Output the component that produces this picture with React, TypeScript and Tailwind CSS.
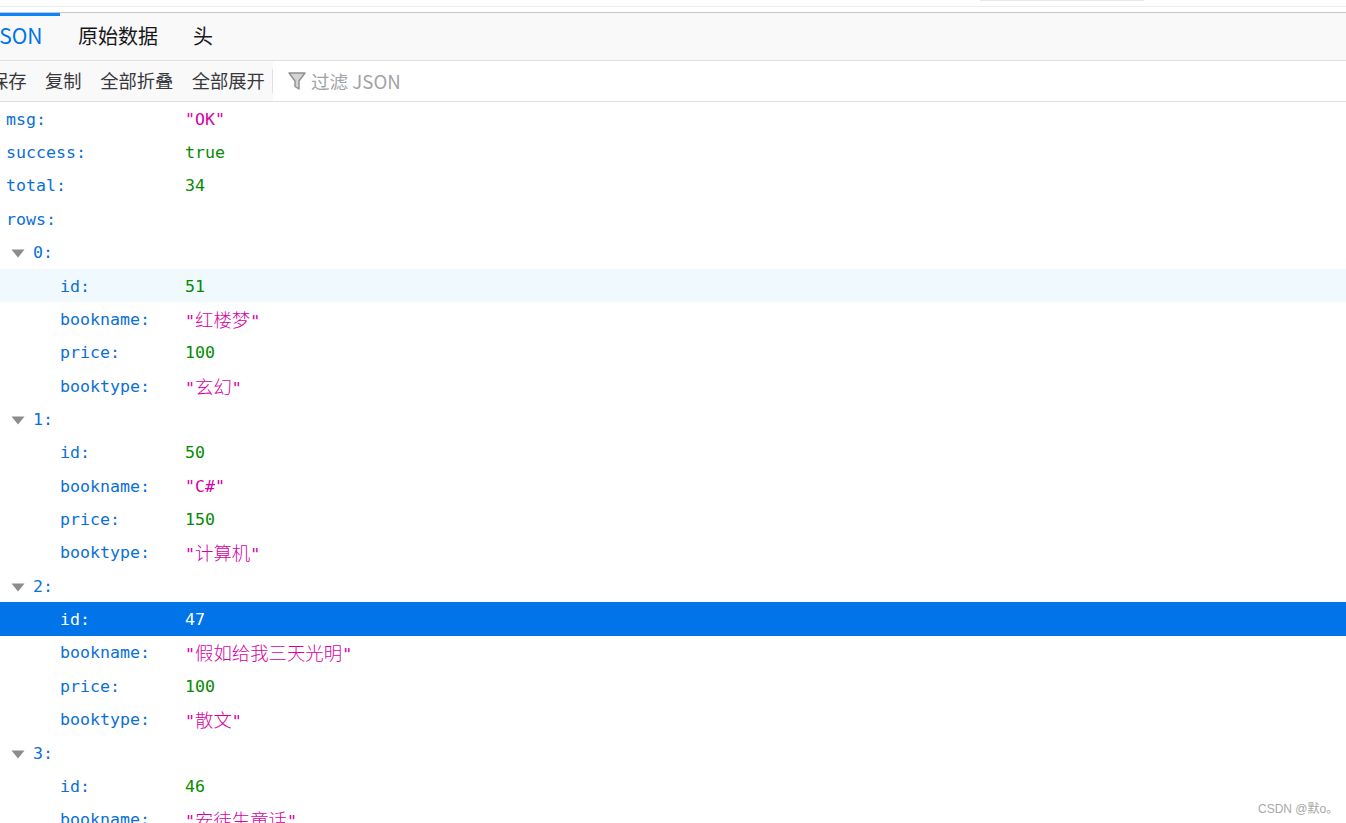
const books = [
  { index: "0", id: "51", name: "红楼梦", price: "100", type: "玄幻" },
  { index: "1", id: "50", name: "C#", price: "150", type: "计算机" },
  { index: "2", id: "47", name: "假如给我三天光明", price: "100", type: "散文" },
  { index: "3", id: "46", name: "安徒生童话", price: "100", type: "童话" },
];

const mono = "font-['DejaVu_Sans_Mono','Noto_Sans_CJK_SC',monospace] text-[16.6px]";
const ui = "font-['Noto_Sans_CJK_SC','Noto_Sans',sans-serif]";

const Str = ({ text }: { text: string }) => (
  <span className="text-[#d600a4]">
    "
    {/[\u4e00-\u9fff]/.test(text) ? (
      <span className="font-['Noto_Sans_CJK_SC',monospace] text-[18.4px] font-light">{text}</span>
    ) : (
      text
    )}
    "
  </span>
);

const Row = ({
  label,
  nested = false,
  bg = "",
  children,
}: {
  label: string;
  nested?: boolean;
  bg?: string;
  children?: React.ReactNode;
}) => (
  <div className={`flex items-center h-[33.36px] shrink-0 pt-[3px] ${nested ? "pl-[60px]" : "pl-[6px]"} ${bg}`}>
    <span className={`text-[#0a70d6] ${nested ? "w-[125px]" : "w-[179px]"}`}>{label}:</span>
    {children}
  </div>
);

const Num = ({ value, white = false }: { value: string; white?: boolean }) => (
  <span className={white ? "text-white" : "text-[#058b00]"}>{value}</span>
);

export default function App() {
  return (
    <div className="relative h-[823px] w-[1346px] overflow-hidden bg-white">
      {/* browser chrome remains above the viewer */}
      <div className="h-[13px] bg-white border-b border-[#c8c8c8] relative">
        <div className="h-[7px] border-b border-[#ededed]" />
        <div className="absolute top-0 left-[980px] w-[164px] h-px bg-[#e8e8e8]" />
      </div>

      <div className={`flex h-[48px] bg-[#f9f9fa] border-b border-[#e0e0e2] ${ui} text-[20px] text-[#18181a]`}>
        <div className="relative w-[60px] overflow-hidden shrink-0">
          <div className="absolute top-0 left-0 right-0 h-[3px] bg-[#0a84ff]" />
          <span className="absolute left-[-12px] top-[7px] text-[21px] text-[#0074e8]">JSON</span>
        </div>
        <span className="ml-[18px] mt-[8px]">原始数据</span>
        <span className="ml-[35px] mt-[8px]">头</span>
      </div>

      <div className={`flex h-[41px] bg-[#f9f9fa] border-b border-[#e0e0e2] ${ui} text-[18.3px] text-[#38383d]`}>
        <div className="flex items-center w-[273px] shrink-0 overflow-hidden">
          <span className="ml-[-10px]">保存</span>
          <span className="ml-[18.5px]">复制</span>
          <span className="ml-[18.5px]">全部折叠</span>
          <span className="ml-[18.5px]">全部展开</span>
          <span className="ml-[7px] w-px h-[24px] bg-[#e0e0e2] shrink-0" />
        </div>
        <div className="flex flex-1 items-center bg-white text-[#a3a3a6]">
          <svg width="18" height="20" viewBox="0 0 18 20" className="ml-[15px]">
            <path d="M1 2h16l-6 8v8l-4-2.5V10z" fill="#d4d4d6" stroke="#8f8f93" strokeWidth="1.4" strokeLinejoin="round" />
          </svg>
          <span className="ml-[5px] mb-[1px] text-[18.6px]">过滤 JSON</span>
        </div>
      </div>

      <div className={`flex flex-col ${mono}`}>
        <Row label="msg"><Str text="OK" /></Row>
        <Row label="success"><Num value="true" /></Row>
        <Row label="total"><Num value="34" /></Row>
        <Row label="rows" />
        {books.map((b) => (
          <div key={b.index} className="flex flex-col">
            <div className="flex items-center h-[33.36px] shrink-0 pt-[3px] pl-[11px]">
              <svg width="14" height="9" viewBox="0 0 14 9" className="mr-[8px]">
                <path d="M0.5 0.5h13L7 8.5z" fill="#8c8c8c" />
              </svg>
              <span className="text-[#0a70d6]">{b.index}:</span>
            </div>
            <Row
              label="id"
              nested
              bg={b.index === "0" ? "bg-[#f0f9fe]" : b.index === "2" ? "bg-[#0074e8] [&>span]:text-white" : ""}
            >
              <Num value={b.id} white={b.index === "2"} />
            </Row>
            <Row label="bookname" nested><Str text={b.name} /></Row>
            <Row label="price" nested><Num value={b.price} /></Row>
            <Row label="booktype" nested><Str text={b.type} /></Row>
          </div>
        ))}
      </div>

      <div className="absolute left-[1258px] top-[800px] font-['Liberation_Sans','Noto_Sans_CJK_SC',sans-serif] text-[12px] text-[#a8a8a8]">
        CSDN @默o。
      </div>
    </div>
  );
}
